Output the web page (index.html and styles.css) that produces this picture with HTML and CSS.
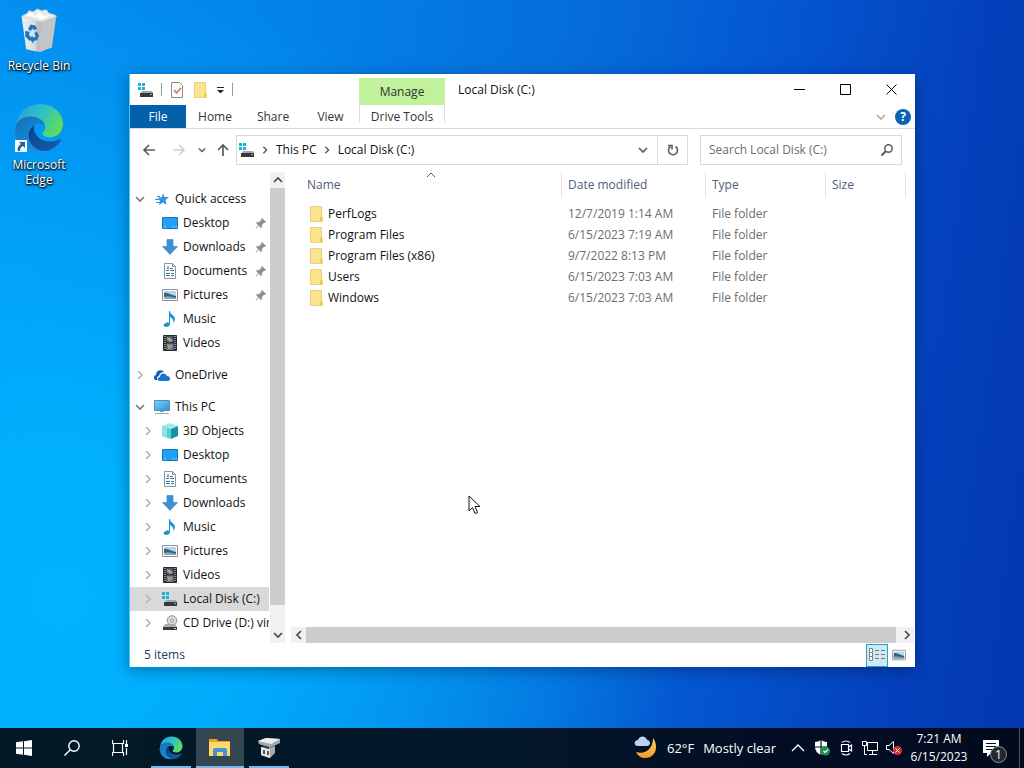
FILE: index.html
```html
<!DOCTYPE html>
<html lang="en">
<head>
<meta charset="utf-8">
<title>Local Disk (C:)</title>
<meta name="viewport" content="width=device-width, initial-scale=1">
<link rel="stylesheet" href="styles.css">
</head>
<body>
<svg class="defs" width="0" height="0" aria-hidden="true">
  <defs>
    <linearGradient id="g-blue" x1="0" y1="0" x2="1" y2="1"><stop offset="0" stop-color="#86d2fb"/><stop offset="1" stop-color="#2c8fdc"/></linearGradient>
    <linearGradient id="g-edge-top" x1="0" y1="0.3" x2="1" y2="0.7"><stop offset="0" stop-color="#27a5dc"/><stop offset="0.5" stop-color="#2fc3c0"/><stop offset="1" stop-color="#66e04c"/></linearGradient>
    <linearGradient id="g-edge-left" x1="0" y1="0" x2="0.6" y2="1"><stop offset="0" stop-color="#1470b8"/><stop offset="1" stop-color="#1a8ee0"/></linearGradient>
    <linearGradient id="g-edge-low" x1="0" y1="0" x2="1" y2="1"><stop offset="0" stop-color="#0b3f86"/><stop offset="1" stop-color="#1560ae"/></linearGradient>
    <linearGradient id="g-bin" x1="0" y1="0" x2="1" y2="0"><stop offset="0" stop-color="#f0f1f2"/><stop offset="0.65" stop-color="#d9dbde"/><stop offset="0.7" stop-color="#c3c6ca"/><stop offset="1" stop-color="#b3b6ba"/></linearGradient>
    <linearGradient id="g-moon" x1="0" y1="0" x2="0" y2="1"><stop offset="0" stop-color="#ffd35a"/><stop offset="1" stop-color="#f39a2c"/></linearGradient>
  </defs>
  <symbol id="i-edge" viewBox="0 0 48 48">
    <path d="M2 22C4 9 13 1 25 1c13 0 22 9 22 19 0 8-6 13-12 13-5 0-8-2-8-4 0-1 3-2 3-6 0-5-6-9-13-9C9 14 3 18 2 22z" fill="url(#g-edge-top)"/>
    <path d="M2 22c1-6 8-9 14-9 8 0 14 5 14 10-1-2-4-3-7-3-6 0-9 5-9 10 0 7 5 14 13 16C12 49 1 38 1 25z" fill="url(#g-edge-left)"/>
    <path d="M20 21c-4 2-6 6-6 10 0 9 8 16 17 15 6-1 11-5 14-10 1-1 0-2-2-1-3 2-6 2-9 2-8 0-15-6-15-13 0-1 0-2 1-3z" fill="url(#g-edge-low)"/>
  </symbol>
  <symbol id="i-drive" viewBox="0 0 16 16">
    <path d="M0 1h3v3H0zM4 1h3v3H4zM0 5h3v3H0zM4 5h3v3H4z" fill="#1fb0d6"/>
    <path d="M4 9h10l1 2H3z" fill="#a4a8aa"/><path d="M2 11h13v4H2z" fill="#34393c"/><path d="M12 12h2v1h-2z" fill="#58d58a"/>
  </symbol>
  <symbol id="i-folder" viewBox="0 0 16 18">
    <path d="M2.500 1.500h11v10l1 1v4h-12z" fill="#fce48e" stroke="#eed07a"/><path d="M12 12l2-1v6h-2z" fill="#f0c95a"/>
  </symbol>
  <symbol id="i-desktop" viewBox="0 0 16 16"><path d="M.5 2.500h15v11H.5z" fill="#1ea0fb" stroke="#1476b8"/><path d="M2 12h2M10 12h1M12 12h1M14 12h1" stroke="#b9e2ff"/></symbol>
  <symbol id="i-download" viewBox="0 0 16 16"><path d="M5 .5h6v7h4.500L8 15.500.5 7.500H5z" fill="#3f91d4" stroke="#2f7fc0" stroke-width=".6"/></symbol>
  <symbol id="i-doc" viewBox="0 0 16 16"><path d="M2.500.5h8l3 3v12h-11z" fill="#fff" stroke="#8b979f"/><path d="M10.500.5v3h3" fill="none" stroke="#8b979f"/><path d="M5 5.500h2M8 5.500h3M4 7.500h3M8 7.500h4M4 10.500h4M9 10.500h3M4 12.500h4M9 12.500h3M6 3v3" stroke="#347fae" fill="none"/></symbol>
  <symbol id="i-picture" viewBox="0 0 16 16"><path d="M.5 2.500h15v11H.5z" fill="#fff" stroke="#929292"/><path d="M2 4h12v8H2z" fill="#aed8f2"/><path d="M2 6c3-1 6 2 12 3v3H2z" fill="#3b6078"/><path d="M2 10c4-1 8 0 12 1v1H2z" fill="#87a9bd"/></symbol>
  <symbol id="i-music" viewBox="0 0 16 16"><path d="M7 0h1c0 4 5 4 5 8 0 1-1 3-2 4 1-3-1-5-3-6v7c0 2-2 3-4 3-3 0-3-4 0-4 1-1 2-1 3 0z" fill="#1e90d8"/></symbol>
  <symbol id="i-video" viewBox="0 0 16 16"><path d="M1.500.5h13v15h-13z" fill="#28292c" stroke="#28292c"/><path d="M4.500 1h7v6.500h-7z" fill="#3e4b92"/><path d="M4.500 8.500h7V15h-7z" fill="#6478a2"/><path d="M5 2l4 1 2 3-3 1-3-2M5 9l5 2-3 4M9 9l2 2v2" fill="#aaa94f"/><path d="M3 1v14M13 1v14" stroke="#e9e9e9" stroke-dasharray="1 1"/></symbol>
  <symbol id="i-star" viewBox="0 0 16 16"><path d="M9 2l1.500 4H15l-3.500 3 1 5L9 11.500 5 14l1-4.500L3.500 7 8 6z" fill="#2e94e2"/><path d="M1 8.500h4M2 11.500h4M3 5.500h3" stroke="#2e94e2"/></symbol>
  <symbol id="i-cloud" viewBox="0 0 16 16"><path d="M1 13c-2-2-1-5 1-5 0-4 4-6 7-4l1 1C7 5 5 7 5 9c-2 0-3 3-1 4z" fill="#0f5fb5"/><path d="M6 14c-3 0-3-4 0-4 0-4 5-5 7-1 4 0 4 5 1 5z" fill="#1775cf"/></symbol>
  <symbol id="i-pc" viewBox="0 0 16 16"><path d="M.5 1.500h15v10H.5z" fill="url(#g-blue)" stroke="#4b8fbd"/><path d="M6 12h4v1H6z" fill="#8aa"/><path d="M1 14.500h14" stroke="#93a5b0"/></symbol>
  <symbol id="i-cube" viewBox="0 0 16 16"><path d="M0 3l8-3 8 3-7 3z" fill="#9eeaf0"/><path d="M0 3l9 3v10l-9-3z" fill="#54cedb"/><path d="M9 6l7-3v10l-7 3z" fill="#1492a8"/><path d="M0 3l5 1.500V15l-5-2z" fill="#8be3e9"/></symbol>
  <symbol id="i-cd" viewBox="0 0 16 16"><circle cx="10" cy="5.500" r="4.800" fill="#d9dbdc" stroke="#8d9193"/><circle cx="10" cy="5.500" r="1.500" fill="#fff" stroke="#888"/><path d="M3 9h10l2 3H1z" fill="#a3a7a9" opacity=".9"/><path d="M1 12h14v3H1z" fill="#3a3e40"/><path d="M12 13h2v1h-2z" fill="#8f9"/></symbol>
  <symbol id="i-right" viewBox="0 0 10 10"><path d="M3 1l4 4-4 4" fill="none" stroke="currentColor" stroke-width="1.700"/></symbol>
  <symbol id="i-left" viewBox="0 0 10 10"><path d="M7 1L3 5l4 4" fill="none" stroke="currentColor" stroke-width="1.700"/></symbol>
  <symbol id="i-down" viewBox="0 0 10 10"><path d="M1 3l4 4 4-4" fill="none" stroke="currentColor" stroke-width="1.700"/></symbol>
  <symbol id="i-up" viewBox="0 0 10 10"><path d="M1 7l4-4 4 4" fill="none" stroke="currentColor" stroke-width="1.700"/></symbol>
  <symbol id="i-pin" viewBox="0 0 12 12"><path d="M7 1l4 4-1 1-1-.3L7 8v2L6 11 3.800 8.800 1 11.500.5 11 3.200 8.200 1 6l1-1h2l2.300-2L6 2z" fill="#8a9197"/></symbol>
  <symbol id="i-arrow" viewBox="0 0 14 14"><path d="M13 7H2M7 2L2 7l5 5" fill="none" stroke="currentColor" stroke-width="1.700"/></symbol>
</svg>

<main class="desktop">
  <nav class="shortcuts" aria-label="Desktop">
    <a class="shortcut" href="#bin">
      <svg class="shortcut-icon" viewBox="0 0 48 48">
        <path d="M20 7"/>
        <path d="M5 9l22 4 1 34-4 1-14-3z" fill="url(#g-bin)"/>
        <path d="M26 13l17-5-5 35-13 5z" fill="#c2c5c8"/>
        <path d="M5 9l6-3 2-3 5 1 4-3 5 2 5-1 3 4 5 1 3 2-17 6z" fill="#e9ebed" stroke="#cdd1d5" stroke-width=".7"/>
        <path d="M10 8l6-3 3 4 6-4 4 4 7-1-8 4z" fill="#fff"/>
        <g fill="#1676c8"><path d="M12 23l3-5 5 1 2 4-4 1-1-2-2 3z"/><path d="M9 25l5 1-1 3 3 4-2 3-5-5z"/><path d="M21 25l3 5-2 5-4 1v3l-4-5 3-4v2h3v-2l-1-2z"/></g>
      </svg>
      <span>Recycle Bin</span>
    </a>
    <a class="shortcut" href="#edge">
      <span class="edge-wrap">
        <svg class="edge-icon"><use href="#i-edge"/></svg>
        <svg class="link-badge" viewBox="0 0 12 12"><path d="M0 0h12v12H0z" fill="#f6f8fa"/><path d="M4 2h6v6L8 6C6 7 5 8 5 11H3C2 8 3 6 6 4z" fill="#1b5fa8"/></svg>
      </span>
      <span>Microsoft<br>Edge</span>
    </a>
  </nav>

  <section class="window" aria-label="Local Disk (C:)">
    <header class="titlebar">
      <div class="quickbar">
        <svg class="ico"><use href="#i-drive"/></svg>
        <i class="sep"></i>
        <button class="plain" aria-label="Properties"><svg class="ico" viewBox="0 0 16 16"><path d="M2.500.5h8l3 3v12h-11z" fill="#fff" stroke="#8b8b8b"/><path d="M5 8l2.500 3L12 6" fill="none" stroke="#d9785c" stroke-width="1.800"/></svg></button>
        <button class="plain" aria-label="New folder"><svg class="ico-folder"><use href="#i-folder"/></svg></button>
        <button class="plain" aria-label="Customize toolbar"><svg class="ico-small" viewBox="0 0 10 10"><path d="M2 2.500h7" stroke="#222"/><path d="M2 5h7L5.500 8.500z" fill="#222"/></svg></button>
        <i class="sep"></i>
      </div>
      <div class="context-title">Manage</div>
      <h1 class="title">Local Disk (C:)</h1>
      <div class="controls">
        <button class="control" aria-label="Minimize"><svg class="glyph" viewBox="0 0 11 11"><path d="M0 5.500h11" stroke="#000"/></svg></button>
        <button class="control" aria-label="Maximize"><svg class="glyph" viewBox="0 0 11 11"><path d="M.5.5h10v10H.5z" fill="none" stroke="#000"/></svg></button>
        <button class="control" aria-label="Close"><svg class="glyph" viewBox="0 0 11 11"><path d="M.5.5l10 10M10.500.5l-10 10" stroke="#000"/></svg></button>
      </div>
    </header>

    <div class="ribbon">
      <button class="tab file">File</button>
      <button class="tab">Home</button>
      <button class="tab">Share</button>
      <button class="tab view">View</button>
      <button class="tab context-tab">Drive Tools</button>
      <div class="ribbon-end">
        <button class="plain pale" aria-label="Expand the ribbon"><svg class="ico-small"><use href="#i-down"/></svg></button>
        <button class="help" aria-label="Help">?</button>
      </div>
    </div>

    <div class="navrow">
      <div class="history">
        <button class="plain" aria-label="Back"><svg class="ico-nav"><use href="#i-arrow"/></svg></button>
        <button class="plain faint" aria-label="Forward"><svg class="ico-nav flip"><use href="#i-arrow"/></svg></button>
        <button class="plain recent" aria-label="Recent locations"><svg class="ico-tiny"><use href="#i-down"/></svg></button>
        <button class="plain" aria-label="Up"><svg class="ico-nav turn"><use href="#i-arrow"/></svg></button>
      </div>
      <div class="address">
        <svg class="ico"><use href="#i-drive"/></svg>
        <svg class="ico-tiny crumb-gap"><use href="#i-right"/></svg>
        <button class="plain crumb">This PC</button>
        <svg class="ico-tiny crumb-gap"><use href="#i-right"/></svg>
        <button class="plain crumb">Local Disk (C:)</button>
        <button class="plain drop" aria-label="Previous locations"><svg class="ico-small"><use href="#i-down"/></svg></button>
        <button class="plain refresh" aria-label="Refresh"><svg class="ico-nav" viewBox="0 0 14 14"><path d="M4.500 3.500a4.500 4.500 0 1 0 5 0" fill="none" stroke="#5c5c5c" stroke-width="1.600"/><path d="M2 2.500h4v4" fill="none" stroke="#5c5c5c" stroke-width="1.600"/></svg></button>
      </div>
      <label class="search">
        <input type="search" placeholder="Search Local Disk (C:)" aria-label="Search Local Disk (C:)">
        <svg class="ico-nav" viewBox="0 0 14 14"><circle cx="8.500" cy="5.500" r="3.700" fill="none" stroke="#5c5c5c" stroke-width="1.500"/><path d="M6 8l-4.500 4.500" stroke="#5c5c5c" stroke-width="2"/></svg>
      </label>
    </div>

    <div class="panes">
      <nav class="tree" aria-label="Folders">
        <ul class="group">
          <li><a class="node root" href="#"><svg class="chev open"><use href="#i-down"/></svg><svg class="ico"><use href="#i-star"/></svg><span>Quick access</span></a></li>
          <li><a class="node" href="#"><i class="chev"></i><svg class="ico"><use href="#i-desktop"/></svg><span>Desktop</span><svg class="pin"><use href="#i-pin"/></svg></a></li>
          <li><a class="node" href="#"><i class="chev"></i><svg class="ico"><use href="#i-download"/></svg><span>Downloads</span><svg class="pin"><use href="#i-pin"/></svg></a></li>
          <li><a class="node" href="#"><i class="chev"></i><svg class="ico"><use href="#i-doc"/></svg><span>Documents</span><svg class="pin"><use href="#i-pin"/></svg></a></li>
          <li><a class="node" href="#"><i class="chev"></i><svg class="ico"><use href="#i-picture"/></svg><span>Pictures</span><svg class="pin"><use href="#i-pin"/></svg></a></li>
          <li><a class="node" href="#"><i class="chev"></i><svg class="ico"><use href="#i-music"/></svg><span>Music</span></a></li>
          <li><a class="node" href="#"><i class="chev"></i><svg class="ico"><use href="#i-video"/></svg><span>Videos</span></a></li>
        </ul>
        <ul class="group">
          <li><a class="node root" href="#"><svg class="chev"><use href="#i-right"/></svg><svg class="ico"><use href="#i-cloud"/></svg><span>OneDrive</span></a></li>
        </ul>
        <ul class="group">
          <li><a class="node root" href="#"><svg class="chev open"><use href="#i-down"/></svg><svg class="ico"><use href="#i-pc"/></svg><span>This PC</span></a></li>
          <li><a class="node" href="#"><svg class="chev"><use href="#i-right"/></svg><svg class="ico"><use href="#i-cube"/></svg><span>3D Objects</span></a></li>
          <li><a class="node" href="#"><svg class="chev"><use href="#i-right"/></svg><svg class="ico"><use href="#i-desktop"/></svg><span>Desktop</span></a></li>
          <li><a class="node" href="#"><svg class="chev"><use href="#i-right"/></svg><svg class="ico"><use href="#i-doc"/></svg><span>Documents</span></a></li>
          <li><a class="node" href="#"><svg class="chev"><use href="#i-right"/></svg><svg class="ico"><use href="#i-download"/></svg><span>Downloads</span></a></li>
          <li><a class="node" href="#"><svg class="chev"><use href="#i-right"/></svg><svg class="ico"><use href="#i-music"/></svg><span>Music</span></a></li>
          <li><a class="node" href="#"><svg class="chev"><use href="#i-right"/></svg><svg class="ico"><use href="#i-picture"/></svg><span>Pictures</span></a></li>
          <li><a class="node" href="#"><svg class="chev"><use href="#i-right"/></svg><svg class="ico"><use href="#i-video"/></svg><span>Videos</span></a></li>
          <li><a class="node selected" href="#" aria-current="true"><svg class="chev"><use href="#i-right"/></svg><svg class="ico"><use href="#i-drive"/></svg><span>Local Disk (C:)</span></a></li>
          <li><a class="node" href="#"><svg class="chev"><use href="#i-right"/></svg><svg class="ico"><use href="#i-cd"/></svg><span>CD Drive (D:) virt</span></a></li>
        </ul>
      </nav>
      <div class="vbar">
        <button class="plain bar-btn" aria-label="Scroll up"><svg class="ico-small"><use href="#i-up"/></svg></button>
        <div class="vthumb"></div>
        <button class="plain bar-btn" aria-label="Scroll down"><svg class="ico-small"><use href="#i-down"/></svg></button>
      </div>
      <div class="content">
        <table class="files">
          <colgroup><col class="c-name"><col class="c-date"><col class="c-type"><col class="c-size"><col></colgroup>
          <thead><tr><th scope="col" class="sorted">Name<svg class="sort" viewBox="0 0 10 10"><path d="M1 7l4-4 4 4" fill="none" stroke="#555"/></svg></th><th scope="col">Date modified</th><th scope="col">Type</th><th scope="col">Size</th><td></td></tr></thead>
          <tbody>
            <tr><td><span class="file-name"><svg class="ico-folder"><use href="#i-folder"/></svg>PerfLogs</span></td><td>12/7/2019 1:14 AM</td><td>File folder</td><td></td><td></td></tr>
            <tr><td><span class="file-name"><svg class="ico-folder"><use href="#i-folder"/></svg>Program Files</span></td><td>6/15/2023 7:19 AM</td><td>File folder</td><td></td><td></td></tr>
            <tr><td><span class="file-name"><svg class="ico-folder"><use href="#i-folder"/></svg>Program Files (x86)</span></td><td>9/7/2022 8:13 PM</td><td>File folder</td><td></td><td></td></tr>
            <tr><td><span class="file-name"><svg class="ico-folder"><use href="#i-folder"/></svg>Users</span></td><td>6/15/2023 7:03 AM</td><td>File folder</td><td></td><td></td></tr>
            <tr><td><span class="file-name"><svg class="ico-folder"><use href="#i-folder"/></svg>Windows</span></td><td>6/15/2023 7:03 AM</td><td>File folder</td><td></td><td></td></tr>
          </tbody>
        </table>
        <div class="hbar">
          <button class="plain bar-btn" aria-label="Scroll left"><svg class="ico-small"><use href="#i-left"/></svg></button>
          <div class="hthumb"></div>
          <button class="plain bar-btn" aria-label="Scroll right"><svg class="ico-small"><use href="#i-right"/></svg></button>
        </div>
      </div>
    </div>

    <footer class="status">
      <span>5 items</span>
      <div class="views">
        <button class="view-btn active" aria-label="Details view"><svg class="ico" viewBox="0 0 16 16"><path d="M.5 1.500h3v4h-3zM.5 5.500h3v4h-3zM.5 9.500h3v4h-3z" fill="#fff" stroke="#818181"/><path d="M6 3.500h4M12 3.500h4M6 7.500h4M12 7.500h4M6 11.500h4M12 11.500h4" stroke="#777"/></svg></button>
        <button class="view-btn" aria-label="Large icons view"><svg class="ico-nav"><use href="#i-picture"/></svg></button>
      </div>
    </footer>
  </section>

  <svg class="pointer" viewBox="0 0 13 20"><path d="M1 1v15l3.500-3.500L7 18.500l2.500-1L7 11.500h5z" fill="#fff" stroke="#111"/></svg>
</main>

<footer class="taskbar">
  <div class="apps">
    <button class="app" aria-label="Start"><svg class="ico" viewBox="0 0 16 16"><path d="M0 2.300l7-1v6.200H0zM8 1.200L16 0v7.500H8zM0 8.500h7v6.200l-7-1zM8 8.500h8V16l-8-1.200z" fill="#fff"/></svg></button>
    <button class="app" aria-label="Search"><svg class="ico" viewBox="0 0 16 16"><circle cx="10" cy="6" r="5.200" fill="none" stroke="#fff" stroke-width="1.400"/><path d="M6.300 9.700L.5 15.500" stroke="#fff" stroke-width="1.400"/></svg></button>
    <button class="app" aria-label="Task view"><svg class="ico" viewBox="0 0 16 16"><path d="M.5 0v3.500h11V0M.5 16v-3.500h11V16M1.500 3.500v9M10.500 3.500v9M14.500 0v4M14.500 8v7" fill="none" stroke="#fff" stroke-width="1.200"/><path d="M13 4h3v3h-3z" fill="#fff"/></svg></button>
    <button class="app running" aria-label="Microsoft Edge"><svg class="ico-app"><use href="#i-edge"/></svg></button>
    <button class="app running current" aria-label="File Explorer"><svg class="ico-app" viewBox="0 0 24 24"><path d="M1 3h8l1 2h12v4H1z" fill="#e9a22b"/><path d="M1 6h21v14H1z" fill="#ffd76b"/><path d="M5 20v-6q0-2 2-2h10q2 0 2 2v6h-4v-4H9v4z" fill="#3e95d1"/></svg></button>
    <button class="app running" aria-label="Device manager"><svg class="ico-app" viewBox="0 0 24 24"><path d="M4 11l9 1 5-2v7l-5 5-9-3z" fill="#a9acae"/><path d="M4 11l9 2v9l-9-3z" fill="#e4e5e5"/><path d="M1 5l8-3 14 1v4l-10 5L2 8z" fill="#a3a6a8"/><path d="M1 5l8-3 14 1-9 5z" fill="#eceded"/><path d="M6 14h2v4H6zM10 15h2v4h-2z" fill="#55585a"/><path d="M8 10l4 1v2l-4-1z" fill="#333"/></svg></button>
  </div>
  <div class="tray">
    <button class="weather">
      <svg class="ico-app" viewBox="0 0 24 24"><path d="M19 2c6 8 3 20-8 20-4 0-7-2-9-6 9 3 17-3 17-14z" fill="url(#g-moon)"/><path d="M4 10c-5 0-4-6 0-6 2-5 8-4 9 0 4 0 4 6 0 6z" fill="#bcd1f4"/></svg>
      <span>62°F</span><span>Mostly clear</span>
    </button>
    <button class="tray-btn" aria-label="Show hidden icons"><svg class="ico-nav" viewBox="0 0 14 14"><path d="M1 10l6-6 6 6" fill="none" stroke="#fff" stroke-width="1.300"/></svg></button>
    <button class="tray-btn" aria-label="Windows Security"><svg class="ico" viewBox="0 0 16 16"><path d="M1 2q3 0 6-2 3 2 6 2v5q0 5-6 8-6-3-6-8z" fill="#fff"/><path d="M7 0v15M1 7h12" stroke="#05101f" stroke-width="1.200"/><circle cx="11.500" cy="11" r="4.500" fill="#159450"/><path d="M9.500 11l1.500 1.500 3-3" fill="none" stroke="#fff" stroke-width="1.200"/></svg></button>
    <button class="tray-btn" aria-label="Meet Now"><svg class="ico" viewBox="0 0 16 16"><path d="M3.500 4.500h7v7h-7zM10.500 7l3-2v6l-3-2M4 2.500q4-3 8 0M4 13.500q4 3 8 0" fill="none" stroke="#fff" stroke-width="1.200"/></svg></button>
    <button class="tray-btn" aria-label="Network"><svg class="ico" viewBox="0 0 16 16"><path d="M5.500 2.500h10v8h-10zM10.500 11v3M7 14.500h8M.5 1.500h4v4h-4zM2.500 6v8.500H5" fill="none" stroke="#fff"/></svg></button>
    <button class="tray-btn" aria-label="Volume muted"><svg class="ico" viewBox="0 0 16 16"><path d="M.5 5.500H3L7.500 1.500v12L3 9.500H.5z" fill="none" stroke="#fff"/><circle cx="11.500" cy="10.500" r="4.500" fill="#d32a36"/><path d="M9.500 8.500l4 4M13.500 8.500l-4 4" stroke="#fff"/></svg></button>
    <button class="clock"><time>7:21 AM</time><time>6/15/2023</time></button>
    <button class="notify" aria-label="Notifications"><svg class="ico-note" viewBox="0 0 18 18"><path d="M1 1h16v13H9l-4 4v-4H1z" fill="#fff"/><path d="M4 4.500h10M4 7.500h10M4 10.500h6" stroke="#05101f"/></svg><span class="count">1</span></button>
    <button class="peek" aria-label="Show desktop"></button>
  </div>
</footer>
</body>
</html>
```

FILE: styles.css
```css
* { box-sizing: border-box; }

body {
  margin: 0;
  height: 100vh;
  display: flex;
  flex-direction: column;
  overflow: hidden;
  font: 12px/16px "Open Sans", "Noto Sans", sans-serif;
  color: #111;
}

button, input { font: inherit; color: inherit; }
a { color: inherit; text-decoration: none; }
ul { list-style: none; margin: 0; padding: 0; }
svg { flex: none; display: block; }
.defs { position: absolute; }

.ico { width: 16px; height: 16px; }
.ico-small { width: 10px; height: 10px; }
.ico-tiny { width: 8px; height: 8px; }
.ico-nav { width: 14px; height: 14px; }
.ico-app { width: 24px; height: 24px; }
.ico-note { width: 18px; height: 18px; }
.ico-folder { width: 16px; height: 18px; }

.plain {
  display: flex;
  align-items: center;
  justify-content: center;
  padding: 0;
  border: 0;
  background: none;
}

/* Desktop */
.desktop {
  position: relative;
  flex: 1;
  min-height: 0;
  background:
    radial-gradient(ellipse 620px 620px at 6% 82%, #00b4ff 0%, rgba(0, 180, 255, 0.85) 30%, rgba(0, 180, 255, 0) 100%),
    linear-gradient(98deg, #048ef0 0%, #0286ea 22%, #056fdc 50%, #0454ce 72%, #0440bb 88%, #0338b2 100%);
}

.shortcuts {
  width: 78px;
  display: flex;
  flex-direction: column;
  gap: 30px;
  padding-top: 6px;
}

.shortcut {
  display: flex;
  flex-direction: column;
  align-items: center;
  gap: 4px;
  text-align: center;
  line-height: 15px;
  color: #fff;
  text-shadow: 0 1px 2px #000, 1px 1px 2px #000;
}

.shortcut-icon { width: 44px; height: 48px; }
.edge-wrap { position: relative; }
.edge-icon { width: 50px; height: 50px; }
.link-badge { position: absolute; left: 1px; bottom: 1px; width: 12px; height: 12px; }

/* Explorer window */
.window {
  position: absolute;
  top: 74px;
  right: 109px;
  bottom: 61px;
  left: 129px;
  display: flex;
  flex-direction: column;
  border-left: 1px solid #48c8ff;
  background: #fff;
  box-shadow: 0 3px 14px rgba(0, 20, 60, 0.4);
}

.titlebar { display: flex; height: 31px; }

.quickbar {
  width: 229px;
  display: flex;
  align-items: center;
  gap: 7px;
  padding-left: 8px;
}

.sep { width: 1px; height: 13px; background: #9a9a9a; }
.context-title {
  width: 86px;
  margin-top: 4px;
  line-height: 27px;
  text-align: center;
  color: #333;
  background: #c1f19b;
}

.title {
  flex: 1;
  margin: 0 0 0 13px;
  font: inherit;
  line-height: 32px;
}

.controls { display: flex; padding-right: 1px; }
.control {
  width: 46px;
  padding: 0;
  display: grid;
  place-items: center;
  border: 0;
  background: none;
}
.glyph { width: 11px; height: 11px; }

.ribbon {
  display: flex;
  height: 24px;
  border-bottom: 1px solid #dadbdc;
}

.tab {
  width: 58px;
  padding: 0;
  border: 0;
  line-height: 23px;
  color: #333;
  background: none;
}
.file { width: 56px; color: #fff; background: #0560ab; }
.view { width: 57px; }
.context-tab {
  width: 86px;
  height: 18px;
  border: 1px solid #dadbdc;
  border-width: 0 1px;
}

.ribbon-end {
  flex: 1;
  display: flex;
  align-items: center;
  justify-content: flex-end;
  gap: 9px;
  padding-right: 4px;
}
.pale { color: #ababab; }
.help {
  width: 16px;
  height: 16px;
  padding: 0;
  border: 0;
  border-radius: 50%;
  line-height: 16px;
  font-weight: 700;
  color: #fff;
  background: #0a64b4;
}

.navrow {
  display: flex;
  align-items: center;
  height: 41px;
  padding-right: 13px;
}
.history {
  width: 106px;
  display: flex;
  align-items: center;
  justify-content: space-between;
  padding: 0 6px 0 12px;
  color: #5c5c5c;
}
.faint { margin-left: 6px; color: #d2d2d2; }
.recent { margin-left: 2px; }
.flip { transform: rotate(180deg); }
.turn { transform: rotate(90deg); }

.address {
  flex: 1;
  display: flex;
  align-items: center;
  height: 30px;
  padding-left: 2px;
  border: 1px solid #d9d9d9;
}
.crumb-gap { margin: 0 7px 0 6px; color: #555; }
.crumb { white-space: nowrap; }
.drop { margin-left: auto; width: 28px; height: 28px; color: #5c5c5c; }
.refresh { width: 30px; height: 28px; border-left: 1px solid #d9d9d9; }

.search {
  width: 202px;
  height: 30px;
  display: flex;
  align-items: center;
  gap: 7px;
  margin-left: 12px;
  padding: 0 7px 0 8px;
  border: 1px solid #d9d9d9;
}
.search input {
  flex: 1;
  min-width: 0;
  padding: 0;
  border: 0;
  outline: 0;
  background: none;
  appearance: none;
}
.search input::placeholder { color: #6d6d6d; opacity: 1; }

.panes { flex: 1; min-height: 0; display: flex; padding-top: 2px; }

/* Folder tree */
.tree {
  width: 140px;
  display: flex;
  flex-direction: column;
  gap: 8px;
  padding-top: 15px;
  padding-right: 1px;
  overflow: hidden;
}
.node {
  display: flex;
  align-items: center;
  height: 24px;
  padding-left: 13px;
  white-space: nowrap;
  overflow: hidden;
}
.root { padding-left: 5px; }
.node span { padding-left: 5px; }
.selected { background: #d9d9d9; }
.chev { flex: none; width: 10px; height: 10px; margin-right: 9px; color: #b5b5b5; }
.chev.open { color: #7d7d7d; }
.pin { width: 12px; height: 12px; margin: 0 2px 0 auto; }

.vbar {
  width: 15px;
  display: flex;
  flex-direction: column;
  background: #f1f1f1;
}
.bar-btn { flex: none; width: 15px; height: 16px; color: #4a4a4a; }
.vthumb { flex: 1; margin-bottom: 22px; background: #cdcdcd; }

/* File list */
.content {
  flex: 1;
  min-width: 0;
  display: flex;
  flex-direction: column;
  justify-content: space-between;
  padding: 0 1px 0 6px;
}
.files {
  width: 100%;
  table-layout: fixed;
  border-collapse: separate;
  border-spacing: 0;
}
.c-name { width: 271px; }
.c-date { width: 144px; }
.c-type { width: 120px; }
.c-size { width: 80px; }
.files th {
  height: 26px;
  padding: 0 6px;
  border-right: 1px solid #e5e5e5;
  font-weight: 400;
  text-align: left;
  color: #4c607a;
}
.files th:first-child { padding-left: 16px; }
.files tbody::before { content: ""; display: block; height: 5px; }
.files td { height: 21px; padding: 0 6px; color: #6d6d6d; white-space: nowrap; }
.files tbody td:first-child { padding-left: 17px; }
.sorted { position: relative; }
.sort { position: absolute; top: -2px; left: 50%; width: 10px; height: 10px; }
.file-name { display: flex; align-items: center; gap: 4px; color: #111; }

.hbar { display: flex; height: 16px; background: #f1f1f1; }
.hthumb { flex: 1; margin-right: 3px; background: #cdcdcd; }

.status {
  display: flex;
  align-items: center;
  justify-content: space-between;
  height: 24px;
  padding: 0 5px 0 14px;
  color: #1e3a5a;
}
.views { display: flex; }
.view-btn {
  display: grid;
  place-items: center;
  width: 22px;
  height: 23px;
  padding: 0;
  border: 1px solid transparent;
  background: none;
}
.view-btn.active { border-color: #26a0c8; background: #cceaf6; }

.pointer { position: absolute; left: 468px; top: 495px; width: 13px; height: 20px; }

/* Taskbar */
.taskbar {
  display: flex;
  justify-content: space-between;
  height: 40px;
  color: #fff;
  background: linear-gradient(90deg, #021a27 0%, #03172a 50%, #020d24 75%, #020a1e 100%);
}
.apps, .tray { display: flex; }
.app {
  width: 48px;
  padding: 0;
  display: grid;
  place-items: center;
  border: 0;
  background: none;
}
.running {
  width: 40px;
  margin: 0 4px;
  padding-top: 2px;
  border-bottom: 2px solid #76b9ed;
}
.app.running:nth-child(4) { margin-left: 7px; }
.current { width: 48px; margin: 0 1px; background: #34464f; }

.weather {
  display: flex;
  align-items: center;
  gap: 9px;
  padding: 0;
  margin-right: 10px;
  border: 0;
  font-size: 13px;
  background: none;
}
.tray-btn {
  width: 24px;
  padding: 0;
  display: grid;
  place-items: center;
  border: 0;
  background: none;
}
.clock {
  width: 66px;
  display: flex;
  flex-direction: column;
  align-items: center;
  justify-content: center;
  gap: 2px;
  padding: 0;
  border: 0;
  background: none;
}
.notify {
  position: relative;
  width: 47px;
  display: flex;
  align-items: center;
  padding: 0 0 0 10px;
  border: 0;
  background: none;
}
.count {
  position: absolute;
  left: 18px;
  top: 18px;
  width: 17px;
  height: 17px;
  border: 1px solid #8a8f96;
  border-radius: 50%;
  line-height: 15px;
  background: #25292f;
}
.peek { width: 5px; padding: 0; border: 0; border-left: 1px solid #4a5260; background: none; }
```
